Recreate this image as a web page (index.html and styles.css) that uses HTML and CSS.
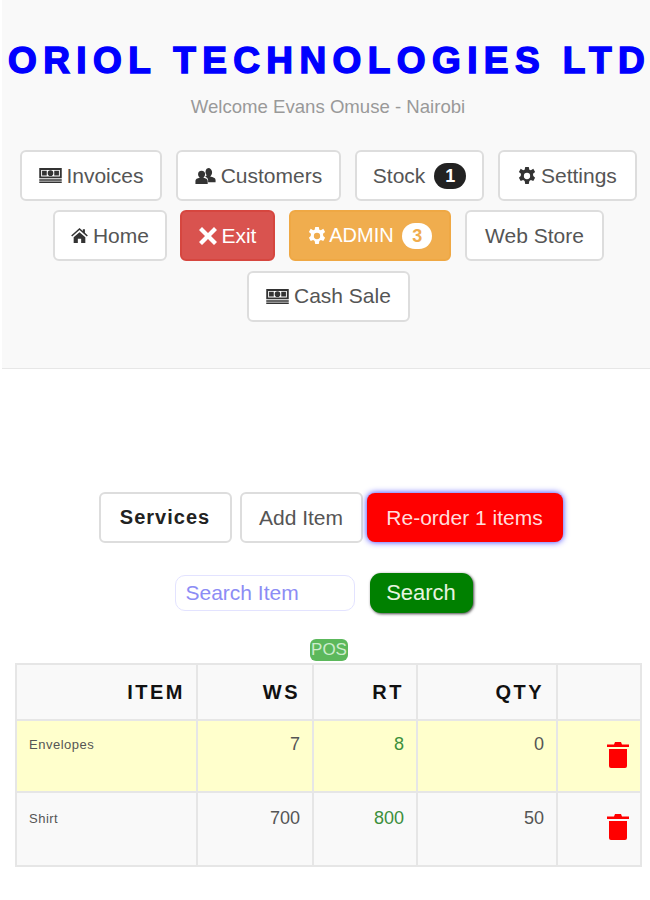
FILE: index.html
```html
<!DOCTYPE html>
<html lang="en">
<head>
    <meta charset="UTF-8">
    <meta name="viewport" content="width=device-width, initial-scale=1.0">
    <title>Oriol Technologies Ltd</title>
    <link rel="stylesheet" href="styles.css">
</head>
<body>

    <svg class="icon-defs" aria-hidden="true">
        <symbol id="i-money" viewBox="0 0 24 16">
            <path d="M0 0h24v11H0zM2 2v7h20V2zM3 3h5v5H3zM16 3h5v5h-5zM12 2.500a3 3 0 1 1 0 6 3 3 0 0 1 0-6zM0 12h24v1.500H0zM0 14.500h24V16H0z" fill-rule="evenodd"/>
        </symbol>
        <symbol id="i-users" viewBox="0 0 24 20">
            <path d="M15 1a4.500 4.500 0 0 1 4.500 5c0 2-1 3.500-2.200 4.500 3 .7 6.200 1.500 6.200 4V17H15v-2.500c0-1.700-1.500-3-3.500-3.700 1-.5 1.500-1.200 1.800-1.800C12.500 8 12 7 12 6c0-3 1-5 3-5z"/>
            <path d="M7.500 4A4 4 0 0 1 11.500 8c0 1.700-.8 3-2 4 3 .7 5 1.500 5 3.500V19H.5v-3.500c0-2 2-2.800 5-3.500-1.200-1-2-2.300-2-4a4 4 0 0 1 4-4z"/>
        </symbol>
        <symbol id="i-cog" viewBox="0 0 20 20">
            <path fill-rule="evenodd" d="M8 0h4l.6 3 1.700.7L17 2l2 3.500-2.300 2 .1 1.500.2 1 2 2-2 3.500-2.700-1-1.700 1-.6 3.500H8l-.6-3.500-1.700-1-2.700 1-2-3.500 2-2 .2-1 .1-1.500-2.300-2L3 2l2.700 1.700L7.400 3zM10 6.500a3.500 3.500 0 1 0 0 7 3.500 3.500 0 0 0 0-7z"/>
        </symbol>
        <symbol id="i-home" viewBox="0 0 20 18">
            <path d="M10 0l4 3.600V1.500h2.500v4.300L20 9l-1.200 1.300L10 2.500 1.200 10.300 0 9zM3 11l7-6 7 6v7h-5v-5H8v5H3z"/>
        </symbol>
        <symbol id="i-times" viewBox="0 0 18 18">
            <path d="M3 0L9 6 15 0 18 3 12 9 18 15 15 18 9 12 3 18 0 15 6 9 0 3z"/>
        </symbol>
        <symbol id="i-trash" viewBox="0 0 22 26">
            <path d="M8 0h6l1 2.500h7V5H0V2.500h7zM2 7h18v17a2 2 0 0 1-2 2H4a2 2 0 0 1-2-2z"/>
        </symbol>
    </svg>

    <div class="top-panel">
        <h1 class="brand">ORIOL TECHNOLOGIES LTD</h1>
        <p class="welcome">Welcome Evans Omuse - Nairobi</p>

        <div class="nav-buttons">
            <a class="btn btn-invoices"><svg class="ico ico-money"><use href="#i-money"/></svg> Invoices</a>
            <a class="btn btn-customers"><svg class="ico ico-users"><use href="#i-users"/></svg> Customers</a>
            <a class="btn btn-stock">Stock <span class="badge badge-dark">1</span></a>
            <a class="btn btn-settings"><svg class="ico ico-cog"><use href="#i-cog"/></svg> Settings</a>
            <a class="btn btn-home"><svg class="ico ico-home"><use href="#i-home"/></svg> Home</a>
            <a class="btn btn-exit"><svg class="ico ico-times"><use href="#i-times"/></svg> Exit</a>
            <a class="btn btn-admin"><svg class="ico ico-cog"><use href="#i-cog"/></svg> ADMIN <span class="badge badge-light">3</span></a>
            <a class="btn btn-store">Web Store</a>
            <a class="btn btn-cash"><svg class="ico ico-money"><use href="#i-money"/></svg> Cash Sale</a>
        </div>
    </div>

    <div class="stock-tools">
        <a class="btn btn-services">Services</a>
        <a class="btn btn-add">Add Item</a>
        <a class="btn btn-reorder">Re-order 1 items</a>
    </div>

    <div class="search-row">
        <input type="text" class="search-input" placeholder="Search Item">
        <button class="search-btn">Search</button>
    </div>

    <div class="pos-row"><span class="pos-tag">POS</span></div>

    <table class="items">
        <thead>
            <tr>
                <th class="col-item">ITEM</th>
                <th class="col-ws">WS</th>
                <th class="col-rt">RT</th>
                <th class="col-qty">QTY</th>
                <th class="col-del"></th>
            </tr>
        </thead>
        <tbody>
            <tr class="low-stock">
                <td class="name">Envelopes</td>
                <td>7</td>
                <td class="retail">8</td>
                <td>0</td>
                <td class="del"><svg class="trash"><use href="#i-trash"/></svg></td>
            </tr>
            <tr class="row-2">
                <td class="name">Shirt</td>
                <td>700</td>
                <td class="retail">800</td>
                <td>50</td>
                <td class="del"><svg class="trash"><use href="#i-trash"/></svg></td>
            </tr>
        </tbody>
    </table>

</body>
</html>
```
FILE: styles.css
```css
* {
    box-sizing: border-box;
}

body {
    font-family: "Liberation Sans", Arial, sans-serif;
    background-color: #fff;
    margin: 0;
    color: #555;
}

.icon-defs {
    display: none;
}

.top-panel {
    background-color: #f9f9f9;
    border-bottom: 1px solid #e7e7e7;
    margin-left: 2px;
    height: 369px;
    padding-top: 41px;
}

.brand {
    margin: 0;
    padding-left: 6px;
    color: #00f;
    font-size: 37px;
    line-height: 40px;
    letter-spacing: 6.4px;
    white-space: nowrap;
    text-align: center;
    -webkit-text-stroke: 1.5px #00f;
}

.welcome {
    margin: 15px 0 0;
    padding-left: 4px;
    color: #999;
    font-size: 18.6px;
    line-height: 22px;
    text-align: center;
}

.nav-buttons {
    display: flex;
    flex-wrap: wrap;
    justify-content: center;
    gap: 9.3px 14px;
    margin-top: 32px;
    padding-left: 5px;
}

.btn {
    display: inline-flex;
    align-items: center;
    justify-content: center;
    height: 51px;
    border: 2px solid #ddd;
    border-radius: 6px;
    background-color: #fff;
    color: #555;
    font-size: 21px;
    white-space: pre;
}

.btn-invoices { width: 142px; }
.btn-customers { width: 165px; }
.btn-stock { width: 129px; }
.btn-settings { width: 139px; }
.btn-home { width: 114px; }
.btn-exit { width: 95px; margin-left: -1px; }
.btn-admin { width: 162px; }
.btn-store { width: 139px; }
.btn-cash { width: 163px; }

.btn-exit {
    background-color: #d9534f;
    border-color: #d6463f;
    color: #fff;
}

.btn-admin {
    background-color: #f0ad4e;
    border-color: #efa844;
    color: #fff;
    font-size: 20px;
}

.ico {
    fill: #333;
    margin-right: -1px;
}

.ico-money { width: 23px; height: 15px; }
.ico-users { width: 21px; height: 18px; }
.ico-cog { width: 18px; height: 18px; }
.ico-home { width: 17px; height: 15px; }
.ico-times { width: 18px; height: 18px; fill: #fff; }
.btn-admin .ico { fill: #fff; }

.badge {
    display: inline-block;
    width: 32px;
    height: 26px;
    margin-left: 3px;
    border-radius: 13px;
    font-size: 18px;
    font-weight: bold;
    line-height: 26px;
    text-align: center;
}

.badge-dark {
    background-color: #222;
    color: #fff;
}

.badge-light {
    width: 30px;
    background-color: #fff;
    color: #f0ad4e;
}

.stock-tools {
    display: flex;
    justify-content: center;
    align-items: center;
    margin-top: 123px;
    padding-left: 11px;
}

.btn-services {
    width: 133px;
    color: #222;
    font-size: 20px;
    font-weight: bold;
    letter-spacing: 1px;
}

.btn-add {
    width: 123px;
    margin-left: 8px;
    font-size: 21px;
}

.btn-reorder {
    width: 196px;
    height: 49px;
    margin-left: 4px;
    background-color: #f00;
    border: 0;
    border-radius: 8px;
    color: #fdd;
    font-size: 21px;
    box-shadow: 0 0 6px #33f;
}

.search-row {
    display: flex;
    justify-content: center;
    align-items: center;
    margin-top: 30px;
    padding-right: 3px;
}

.search-input {
    width: 180px;
    height: 36px;
    padding: 0 10px;
    border: 1px solid #e3e3ff;
    border-radius: 10px;
    font-family: inherit;
    font-size: 21px;
}

.search-input::placeholder {
    color: #8c8cf5;
}

.search-btn {
    width: 103px;
    height: 40px;
    margin-left: 15px;
    background-color: #008000;
    border: 0;
    border-radius: 11px;
    color: #e8f5e0;
    font-family: inherit;
    font-size: 22px;
    box-shadow: 1px 1px 3px #444;
}

.pos-row {
    display: flex;
    justify-content: center;
    margin-top: 26px;
    padding-left: 8px;
}

.pos-tag {
    width: 38px;
    height: 22px;
    background-color: #5cb85c;
    border-radius: 6px;
    color: #cdeccd;
    font-size: 17px;
    line-height: 22px;
    text-align: center;
}

.items {
    width: 627px;
    margin: 2px 0 0 15px;
    border-collapse: collapse;
    table-layout: fixed;
    background-color: #f9f9f9;
}

.items th,
.items td {
    border: 2px solid #e6e6e6;
    text-align: right;
}

.items th {
    height: 56px;
    padding: 0 12px 0 0;
    color: #111;
    font-size: 20px;
    letter-spacing: 2.5px;
}

.items th.col-item {
    padding-right: 11px;
}

.items td {
    height: 74px;
    padding: 14px 12px 0 0;
    vertical-align: top;
    font-size: 18px;
    line-height: 22px;
}

.col-item { width: 181px; }
.col-ws { width: 116px; }
.col-rt { width: 104px; }
.col-qty { width: 140px; }

.low-stock td {
    height: 72px;
    padding-top: 12px;
    background-color: #ffc;
}

.items td.name {
    padding: 15px 0 0 12px;
    font-size: 13px;
    letter-spacing: 0.5px;
    text-align: left;
}

.low-stock td.name {
    padding-top: 13px;
}

.items td.retail {
    color: #3c8f3c;
}

.items td.del {
    padding: 21px 11px 0 0;
}

.trash {
    width: 22px;
    height: 26px;
    fill: #f00;
}
```
